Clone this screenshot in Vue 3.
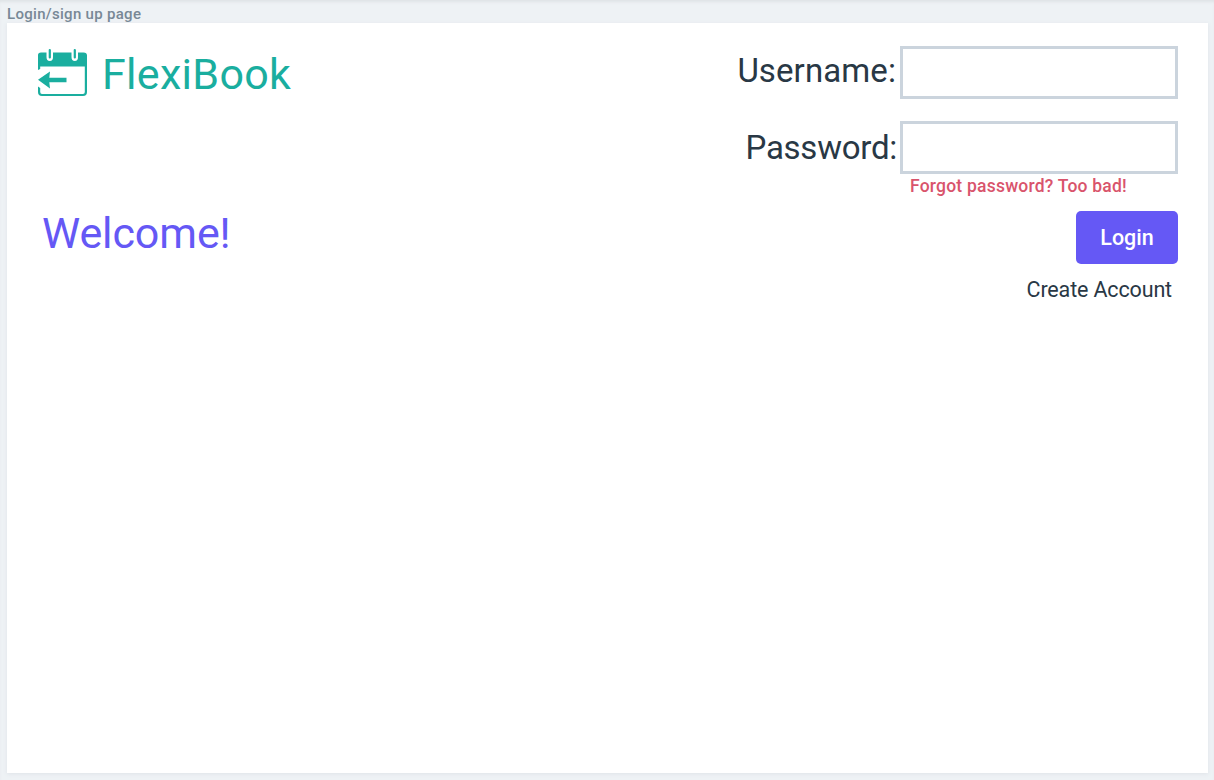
<script setup>
import { ref } from 'vue'

const username = ref('')
const password = ref('')
</script>

<template>
  <div class="canvas">
    <div class="frame-title"><span>Login/sign up page</span></div>
    <main class="frame">
      <section class="intro">
        <div class="brand">
          <svg class="logo" width="50" height="50" viewBox="0 0 50 50" fill="none">
            <path d="M1 22V7Q1 4.500 4 4.500H9.500V9Q9.500 13 12.800 13T16 9V4.500H34.500V9Q34.500 13 37.800 13T41 9V4.500H46.500Q50 4.500 50 7.500V44Q50 48 46 48H5Q1 48 1 44V38.500L3.200 40V44Q3.200 46 5 46H46Q47.800 46 47.800 44V18.500H3.200V21Z" fill="#1aae9f" />
            <path d="M12.800 2V9.500M37.800 2V9.500" stroke="#1aae9f" stroke-width="2.200" stroke-linecap="round" />
            <path d="M1 31.800L13 23.500L12.300 29.700H29.500V34.200H12.300L13 40.500Z" fill="#1aae9f" />
          </svg>
          <span class="name">FlexiBook</span>
        </div>
        <h1 class="welcome"><span>Welcome!</span></h1>
      </section>
      <form class="login" @submit.prevent>
        <label class="row user">
          <span class="label">Username:</span>
          <input v-model="username" type="text" />
        </label>
        <label class="row pass">
          <span class="label">Password:</span>
          <input v-model="password" type="password" />
        </label>
        <div class="forgot"><span>Forgot password? Too bad!</span></div>
        <button class="submit" type="submit"><span>Login</span></button>
        <a class="create"><span>Create Account</span></a>
      </form>
    </main>
  </div>
</template>

<style>
body {
  background: #eef2f5;
}
</style>

<style scoped>
.canvas {
  box-sizing: border-box;
  height: 780px;
  padding: 0 6px 7px 7px;
  overflow: hidden;
  background: #eef2f5;
  box-shadow: inset 0 3px 3px -1px #dfe3e6;
  font-family: Roboto, "Liberation Sans", sans-serif;
  color: #293845;
}
.frame-title {
  height: 23px;
  line-height: 28px;
  font-size: 15px;
  font-weight: 500;
  letter-spacing: 0.3px;
  color: #788896;
}
.frame {
  box-sizing: border-box;
  display: flex;
  justify-content: space-between;
  height: 750px;
  padding: 23px 30px 0;
  background: #fff;
  box-shadow: 0 1px 4px #dfe3e8;
}
.brand {
  display: flex;
  align-items: center;
  gap: 15px;
  height: 54px;
}
.logo {
  flex: none;
}
.name {
  padding-top: 1px;
  font-size: 43px;
  letter-spacing: 0.3px;
  color: #1aae9f;
}
.welcome {
  margin: 106px 0 0 5px;
  font-size: 43px;
  line-height: 54px;
  font-weight: 400;
  letter-spacing: -0.1px;
  color: #6558f5;
}
.login {
  display: flex;
  flex-direction: column;
  align-items: flex-end;
}
.row {
  display: flex;
  align-items: center;
  gap: 3px;
  height: 53px;
}
.pass {
  margin-top: 22px;
}
.label {
  font-size: 33px;
  line-height: 40px;
}
.user .label {
  margin: 0 1px 4px 0;
  letter-spacing: 0.1px;
}
input {
  box-sizing: border-box;
  width: 278px;
  height: 53px;
  padding: 0 12px;
  border: 3px solid #cbd4dd;
  background: #fff;
  font: 24px Roboto, sans-serif;
  color: inherit;
  outline: none;
}
.pass .label {
  letter-spacing: -0.25px;
}
.forgot {
  width: 268px;
  height: 37px;
  line-height: 24px;
  font-size: 17.5px;
  font-weight: 500;
  letter-spacing: 0.22px;
  color: #d9546c;
}
.submit {
  width: 102px;
  height: 53px;
  padding: 0;
  border: 0;
  border-radius: 5px;
  background: #6558f5;
  color: #fff;
  font: 500 21.5px Roboto, sans-serif;
}
.create {
  margin: 12px 6px 0 0;
  font-size: 21.5px;
  line-height: 28px;
  letter-spacing: -0.15px;
}
</style>
